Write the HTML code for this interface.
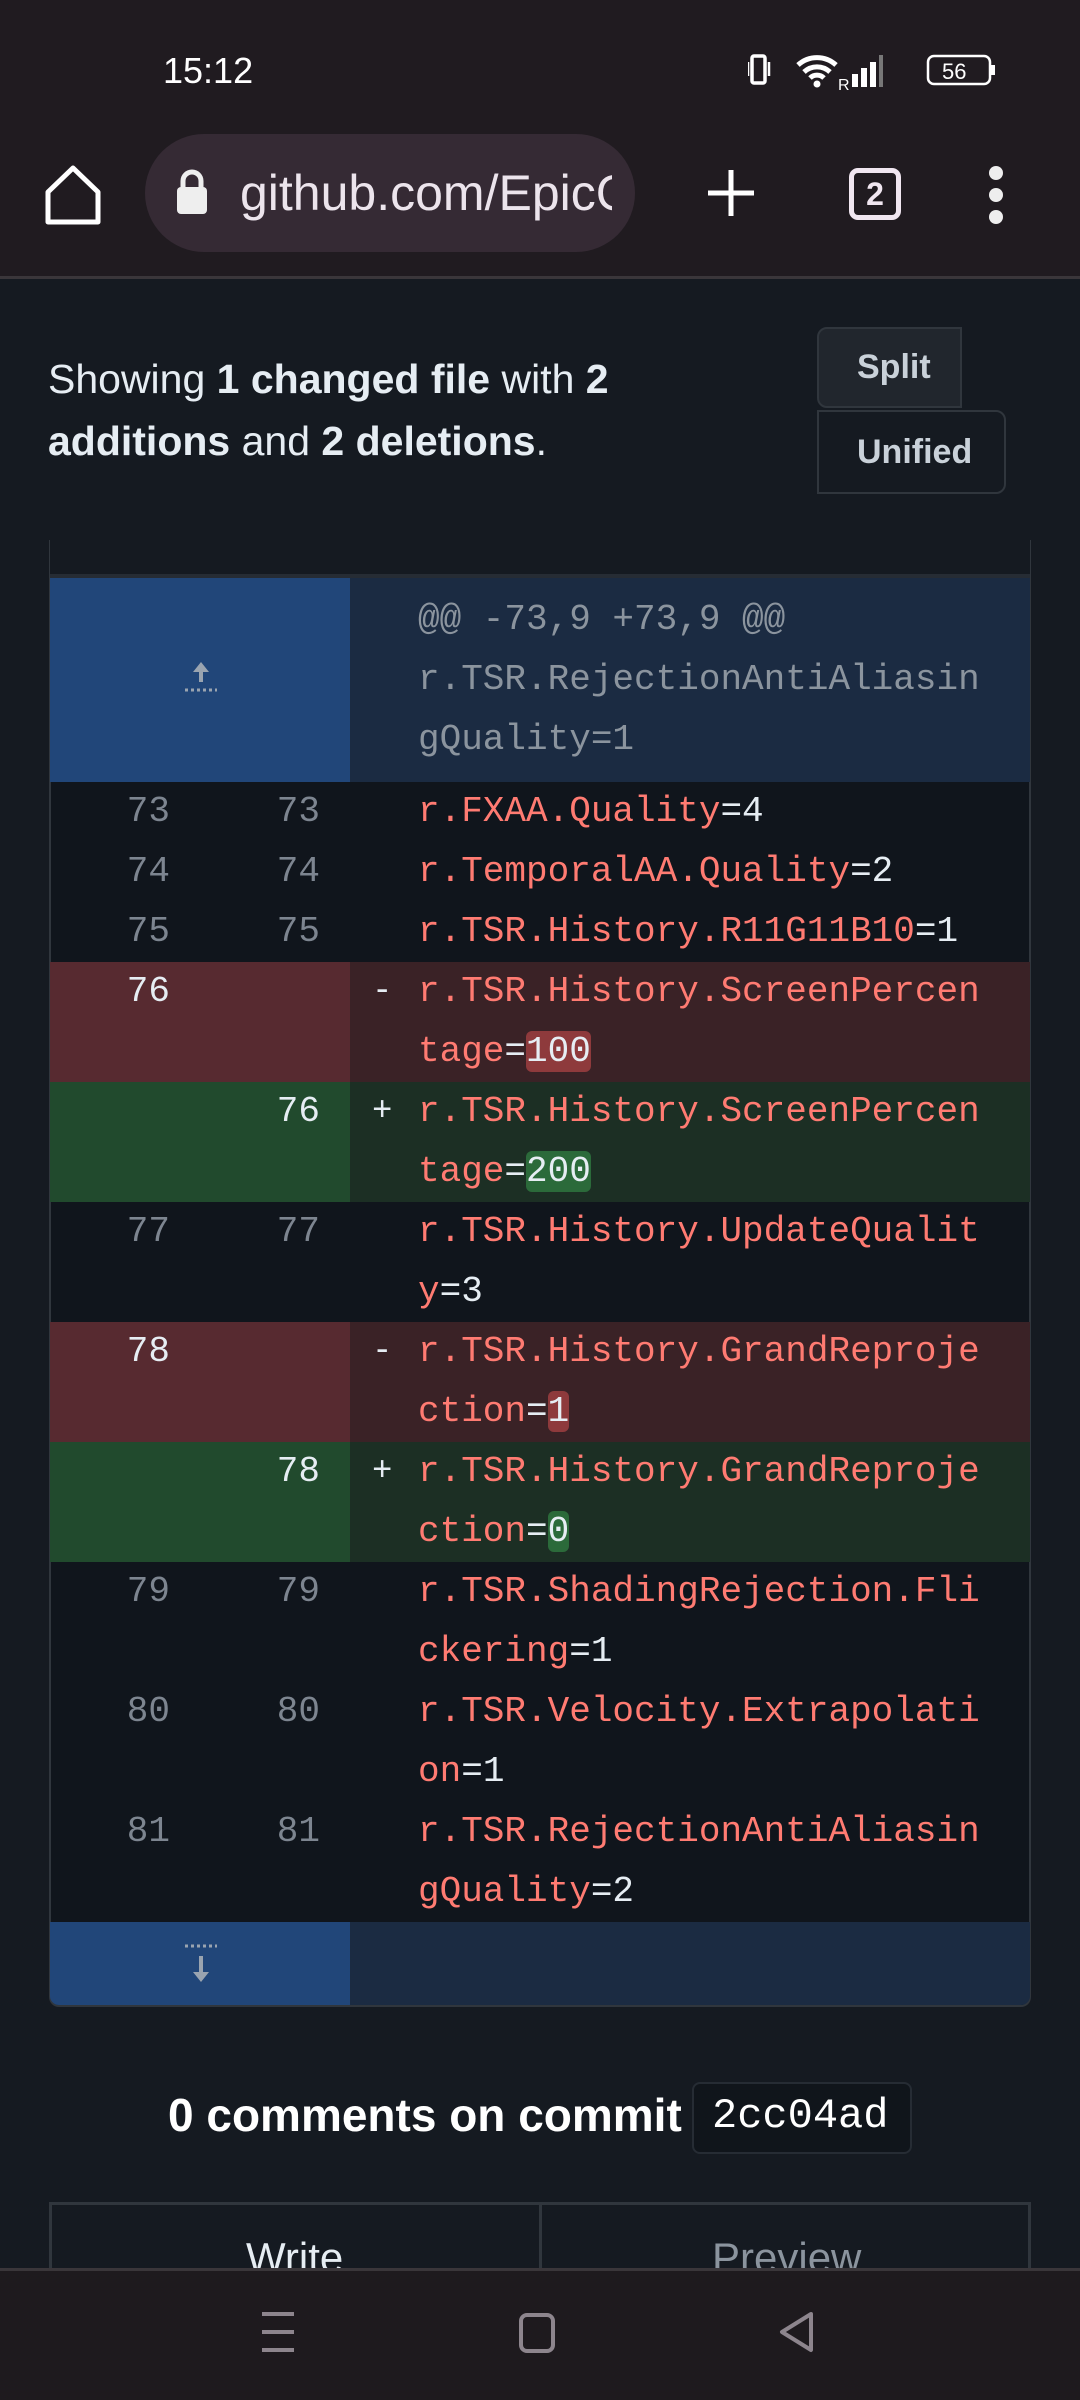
<!DOCTYPE html>
<html><head><meta charset="utf-8"><style>
*{margin:0;padding:0;box-sizing:border-box}
body{width:1080px;height:2400px;overflow:hidden;background:#151a21;font-family:"Liberation Sans",sans-serif;color:#e6edf3;position:relative}
.top{position:absolute;left:0;top:0;width:1080px;height:279px;background:#201b20;border-bottom:3px solid #3a363a}
.abs{position:absolute}
.mono{font-family:"Liberation Mono",monospace;font-size:36px}
.row{position:absolute;left:50px;width:980px}
.g{position:absolute;left:0;top:0;width:300px;height:100%}
.c{position:absolute;left:300px;top:0;width:680px;height:100%}
.n1,.n2{position:absolute;top:0;line-height:60px;color:#7d8590;font-family:"Liberation Mono",monospace;font-size:36px;text-align:right;width:80px}
.n1{left:40px}.n2{left:190px}
.code{position:absolute;left:368px;top:0;line-height:60px;color:#ff7b72;font-family:"Liberation Mono",monospace;font-size:36px;white-space:pre}
.w{color:#e6edf3}
.sg{position:absolute;left:322px;top:0;line-height:60px;color:#e6edf3;font-family:"Liberation Mono",monospace;font-size:34px}
.del .g{background:#572a30}.del .c{background:#3a2226}
.add .g{background:#214a2d}.add .c{background:#1c2f24}
.del .n1,.add .n2{color:#e6edf3}
.hr{background:#8e3a3c;border-radius:6px;color:#e6edf3}
.hg{background:#2b6a3a;border-radius:6px;color:#e6edf3}
</style></head><body>
<div class="top"></div>
<div class="abs" style="left:163px;top:50px;font-size:36px;color:#fff">15:12</div>
<svg class="abs" style="left:748px;top:50px" width="250" height="44" viewBox="0 0 250 40">
<rect x="4" y="4" width="13" height="27" rx="2" fill="none" stroke="#fff" stroke-width="3.5"/>
<path d="M0 10v14M21 10v14" stroke="#fff" stroke-width="2.5"/>
<path d="M50 13a28 28 0 0 1 38 0M56 20a19 19 0 0 1 26 0M62 26a10 10 0 0 1 14 0" fill="none" stroke="#fff" stroke-width="5"/>
<circle cx="69" cy="32" r="3.5" fill="#fff"/>
<text x="90" y="38" font-size="16" fill="#fff" font-family="Liberation Sans">R</text>
<rect x="104" y="22" width="6" height="13" fill="#fff"/><rect x="113" y="16" width="6" height="19" fill="#fff"/><rect x="122" y="10" width="6" height="25" fill="#fff"/><rect x="131" y="3" width="4" height="32" fill="#777"/>
<rect x="180" y="4" width="62" height="28" rx="6" fill="none" stroke="#fff" stroke-width="2.5"/>
<rect x="243" y="13" width="4" height="10" fill="#fff"/>
<text x="194" y="27" font-size="22" fill="#fff" font-family="Liberation Sans">56</text>
</svg>
<svg class="abs" style="left:44px;top:164px" width="58" height="62" viewBox="0 0 58 62"><path d="M4 58V28L29 4l25 24v30z" fill="none" stroke="#fff" stroke-width="5" stroke-linejoin="round"/></svg>
<div class="abs" style="left:145px;top:134px;width:490px;height:118px;border-radius:59px;background:#352a34"></div>
<svg class="abs" style="left:175px;top:168px" width="34" height="48" viewBox="0 0 34 48"><path d="M8 20V13a9 9 0 0 1 18 0v7" fill="none" stroke="#eee" stroke-width="5"/><rect x="2" y="19" width="30" height="27" rx="4" fill="#eee"/></svg>
<div class="abs" style="left:240px;top:164px;width:372px;overflow:hidden;white-space:nowrap;font-size:50px;color:#ece4ec">github.com/EpicGames</div>
<svg class="abs" style="left:706px;top:168px" width="50" height="50"><path d="M25 2v46M2 25h46" stroke="#fff" stroke-width="5"/></svg>
<div class="abs" style="left:849px;top:168px;width:52px;height:52px;border:5px solid #f0e6f0;border-radius:9px;font-size:32px;font-weight:bold;text-align:center;line-height:42px;color:#f0e6f0">2</div>
<svg class="abs" style="left:984px;top:164px" width="24" height="62"><circle cx="12" cy="9" r="7" fill="#eee"/><circle cx="12" cy="31" r="7" fill="#eee"/><circle cx="12" cy="53" r="7" fill="#eee"/></svg>

<div class="abs" style="left:48px;top:348px;font-size:41px;line-height:62px;width:630px">Showing <b>1 changed file</b> with <b>2 additions</b> and <b>2 deletions</b>.</div>
<div class="abs" style="left:817px;top:327px;width:145px;height:81px;background:#21262d;border:2px solid #30363d;border-radius:10px 0 0 10px;font-size:34px;font-weight:bold;color:#c9d1d9;line-height:77px;padding-left:38px">Split</div>
<div class="abs" style="left:817px;top:410px;width:189px;height:84px;border:2px solid #30363d;border-radius:0 10px 10px 0;font-size:34px;font-weight:bold;color:#c9d1d9;line-height:80px;padding-left:38px">Unified</div>

<div class="abs" style="left:49px;top:540px;width:982px;height:1467px;border:2px solid #30363d;border-top:none;border-radius:0 0 10px 10px;background:#10151c"></div>
<div class="abs" style="left:50px;top:540px;width:980px;height:34px;background:#151a21"></div>
<div class="abs" style="left:50px;top:574px;width:980px;height:4px;background:#262c34"></div>
<div class="row" style="top:578px;height:204px"><div class="g" style="background:#214679"></div><div class="c" style="background:#1b2b42"></div>
<svg class="abs" style="left:130px;top:80px" width="42" height="36" viewBox="0 0 42 36"><path d="M21 4l-8 10h6v10h4V14h6z" fill="#9aa4b0"/><path d="M5 32h32" stroke="#9aa4b0" stroke-width="3" stroke-dasharray="3 3"/></svg>
<div class="code" style="top:12px;color:#8b949e">@@ -73,9 +73,9 @@
r.TSR.RejectionAntiAliasin
gQuality=1</div></div>

<div class="row" style="top:782px;height:60px"><div class="n1">73</div><div class="n2">73</div><div class="code">r.FXAA.Quality<span class="w">=4</span></div></div>
<div class="row" style="top:842px;height:60px"><div class="n1">74</div><div class="n2">74</div><div class="code">r.TemporalAA.Quality<span class="w">=2</span></div></div>
<div class="row" style="top:902px;height:60px"><div class="n1">75</div><div class="n2">75</div><div class="code">r.TSR.History.R11G11B10<span class="w">=1</span></div></div>
<div class="row del" style="top:962px;height:120px"><div class="g"></div><div class="c"></div><div class="n1">76</div><div class="sg">-</div><div class="code">r.TSR.History.ScreenPercen
tage<span class="w">=</span><span class="hr">100</span></div></div>
<div class="row add" style="top:1082px;height:120px"><div class="g"></div><div class="c"></div><div class="n2">76</div><div class="sg">+</div><div class="code">r.TSR.History.ScreenPercen
tage<span class="w">=</span><span class="hg">200</span></div></div>
<div class="row" style="top:1202px;height:120px"><div class="n1">77</div><div class="n2">77</div><div class="code">r.TSR.History.UpdateQualit
y<span class="w">=3</span></div></div>
<div class="row del" style="top:1322px;height:120px"><div class="g"></div><div class="c"></div><div class="n1">78</div><div class="sg">-</div><div class="code">r.TSR.History.GrandReproje
ction<span class="w">=</span><span class="hr">1</span></div></div>
<div class="row add" style="top:1442px;height:120px"><div class="g"></div><div class="c"></div><div class="n2">78</div><div class="sg">+</div><div class="code">r.TSR.History.GrandReproje
ction<span class="w">=</span><span class="hg">0</span></div></div>
<div class="row" style="top:1562px;height:120px"><div class="n1">79</div><div class="n2">79</div><div class="code">r.TSR.ShadingRejection.Fli
ckering<span class="w">=1</span></div></div>
<div class="row" style="top:1682px;height:120px"><div class="n1">80</div><div class="n2">80</div><div class="code">r.TSR.Velocity.Extrapolati
on<span class="w">=1</span></div></div>
<div class="row" style="top:1802px;height:120px"><div class="n1">81</div><div class="n2">81</div><div class="code">r.TSR.RejectionAntiAliasin
gQuality<span class="w">=2</span></div></div>
<div class="row" style="top:1922px;height:83px;border-radius:0 0 9px 9px;overflow:hidden"><div class="g" style="background:#214679"></div><div class="c" style="background:#1b2b42"></div>
<svg class="abs" style="left:130px;top:20px" width="42" height="44" viewBox="0 0 42 44"><path d="M5 4h32" stroke="#9aa4b0" stroke-width="3" stroke-dasharray="3 3"/><path d="M19 14v16h-6l8 10 8-10h-6V14z" fill="#9aa4b0"/></svg></div>

<div class="abs" style="left:168px;top:2088px;font-size:46px;font-weight:bold;color:#fff">0 comments on commit</div>
<div class="abs" style="left:692px;top:2082px;width:220px;height:72px;border:2px solid #262c34;border-radius:8px;background:#10151b"></div>
<div class="abs mono" style="left:712px;top:2092px;font-size:42px;color:#fff">2cc04ad</div>

<div class="abs" style="left:49px;top:2202px;width:982px;height:120px;border:3px solid #30363d;border-bottom:none"></div>
<div class="abs" style="left:539px;top:2202px;width:3px;height:100px;background:#30363d"></div>
<div class="abs" style="left:246px;top:2234px;font-size:42px;color:#e6edf3">Write</div>
<div class="abs" style="left:712px;top:2234px;font-size:42px;color:#8b949e">Preview</div>

<div class="abs" style="left:0;top:2268px;width:1080px;height:132px;background:#1e1a1e;border-top:3px solid #3a363a"></div>
<svg class="abs" style="left:258px;top:2310px" width="40" height="44"><path d="M4 4h32M4 22h32M4 40h32" stroke="#8d858d" stroke-width="4"/></svg>
<svg class="abs" style="left:518px;top:2312px" width="40" height="44"><rect x="3" y="3" width="32" height="36" rx="6" fill="none" stroke="#8d858d" stroke-width="4"/></svg>
<svg class="abs" style="left:776px;top:2310px" width="40" height="44"><path d="M35 4L6 22l29 18z" fill="none" stroke="#8d858d" stroke-width="4" stroke-linejoin="round"/></svg>
</body></html>
